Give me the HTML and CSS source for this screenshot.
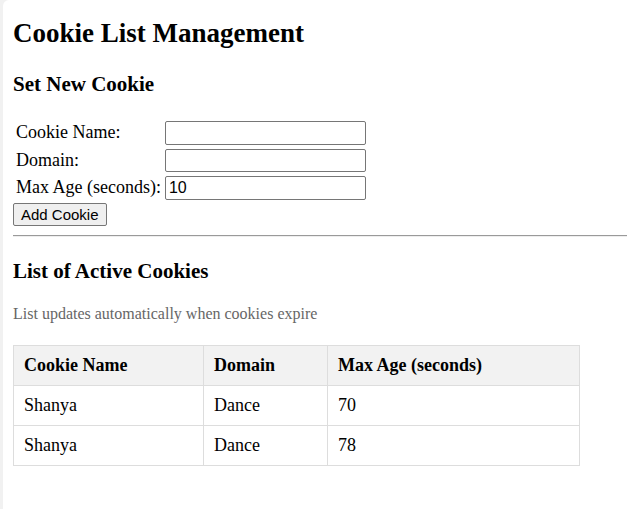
FILE: index.html
```html
<!DOCTYPE html>
<html>
<head>
<meta charset="utf-8">
<title>Cookie List Management</title>
<link rel="stylesheet" href="styles.css">
</head>
<body>
<div class="page">
  <h1 class="title">Cookie List Management</h1>
  <h2 class="section">Set New Cookie</h2>
  <table class="form">
    <tr><td>Cookie Name:</td><td><input class="field" type="text"></td></tr>
    <tr><td>Domain:</td><td><input class="field" type="text"></td></tr>
    <tr><td>Max Age (seconds):</td><td><input class="field" type="text" value="10"></td></tr>
  </table>
  <button class="btn">Add Cookie</button>
  <hr class="rule">
  <h2 class="section section-list">List of Active Cookies</h2>
  <p class="note">List updates automatically when cookies expire</p>
  <table class="cookies">
    <thead>
      <tr><th class="c1">Cookie Name</th><th class="c2">Domain</th><th class="c3">Max Age (seconds)</th></tr>
    </thead>
    <tbody>
      <tr><td>Shanya</td><td>Dance</td><td>70</td></tr>
      <tr><td>Shanya</td><td>Dance</td><td>78</td></tr>
    </tbody>
  </table>
</div>
</body>
</html>
```
FILE: styles.css
```css
html, body {
  margin: 0;
  padding: 0;
  background: #f1f1f1;
  height: 100%;
}
body {
  font-family: "Liberation Serif", "Times New Roman", serif;
  font-size: 18px;
  color: #000;
}
.page {
  margin-left: 3px;
  min-height: 100%;
  background: #fff;
  border-top-left-radius: 6px;
  padding: 1px 0 0 10px;
  box-sizing: border-box;
}
.title {
  font-size: 27px;
  font-weight: bold;
  margin: 17px 0 0 0;
  line-height: 31px;
}
.section {
  font-size: 21px;
  font-weight: bold;
  margin: 23px 0 0 0;
  line-height: 24px;
}
.section-list {
  margin-top: 22px;
}
.form {
  border-spacing: 2px;
  margin-top: 22px;
}
.form td {
  padding: 1px;
  font-size: 18px;
  line-height: 21px;
}
.field {
  box-sizing: border-box;
  width: 201px;
  height: 23.5px;
  font-family: "Liberation Sans", Arial, sans-serif;
  font-size: 16px;
  padding: 1px 3px;
  border: 1px solid #767676;
  border-radius: 2px;
  margin: 0;
}
.btn {
  display: block;
  font-family: "Liberation Sans", Arial, sans-serif;
  font-size: 15px;
  height: 23px;
  padding: 1px 7px;
  border: 1px solid #767676;
  border-radius: 2px;
  background: #efefef;
  color: #000;
  margin: 0;
}
.rule {
  border: 0;
  border-top: 1px solid #9a9a9a;
  border-bottom: 1px solid #eee;
  margin: 9px 0 0 0;
}
.note {
  font-size: 16px;
  color: #666;
  margin: 22px 0 0 0;
}
.cookies {
  border-collapse: collapse;
  width: 567px;
  margin-top: 22px;
}
.cookies th, .cookies td {
  border: 1px solid #ddd;
  padding: 10px;
  text-align: left;
  font-size: 18px;
  line-height: 19px;
}
.cookies th {
  background: #f2f2f2;
}
.c1 { width: 169px; }
.c2 { width: 103px; }
```
